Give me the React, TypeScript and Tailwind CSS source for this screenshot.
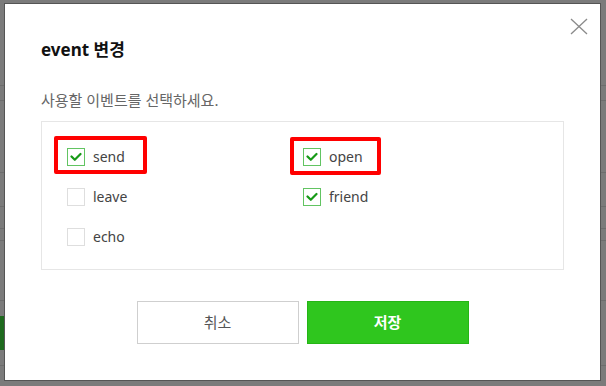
type EventItem = {
  name: string;
  checked: boolean;
  marked?: boolean;
};

const leftColumn: EventItem[] = [
  { name: "send", checked: true, marked: true },
  { name: "leave", checked: false },
  { name: "echo", checked: false },
];

const rightColumn: EventItem[] = [
  { name: "open", checked: true, marked: true },
  { name: "friend", checked: true },
];

function CheckBox({ checked }: { checked: boolean }) {
  return (
    <span
      className={
        checked
          ? "flex h-[18px] w-[18px] items-center justify-center border border-[#62c462] bg-white"
          : "flex h-[18px] w-[18px] items-center justify-center border border-[#dedede] bg-white"
      }
    >
      {checked && (
        <svg width="12" height="10" viewBox="0 0 12 10" fill="none">
          <polyline points="1.5,4.5 4.8,7.8 10.5,2" stroke="#169a16" strokeWidth="2.2" strokeLinecap="round" strokeLinejoin="round" />
        </svg>
      )}
    </span>
  );
}

function EventRow({ item }: { item: EventItem }) {
  return (
    <div className="flex h-10 items-center">
      <label className="relative flex items-center gap-[8px] text-[14px] text-[#444]">
        <CheckBox checked={item.checked} />
        <span className="leading-[18px]">{item.name}</span>
        {item.marked && (
          <span
            className={
              item.name === "send"
                ? "pointer-events-none absolute left-[-13px] top-[-12px] h-[38px] w-[93px] rounded-[2px] border-[4px] border-[#ff0000]"
                : "pointer-events-none absolute left-[-13px] top-[-11px] h-[38px] w-[91px] rounded-[2px] border-[4px] border-[#ff0000]"
            }
          />
        )}
      </label>
    </div>
  );
}

// faint page content behind the overlay
const bgLines = [85, 100, 172, 206, 228, 240, 300, 365];

export default function App() {
  return (
    <div
      className="relative h-[386px] w-[606px] overflow-hidden bg-[#7b7b7b]"
      style={{ fontFamily: '"Noto Sans", "Noto Sans CJK KR", sans-serif' }}
    >
      <div className="absolute inset-0">
        {bgLines.map((y) => (
          <div key={y} className="absolute left-0 right-0 h-px bg-[#6d6d6d]" style={{ top: y }} />
        ))}
        <div className="absolute left-0 top-[316px] h-[34px] w-[5px] bg-[#1e6a1e]" />
      </div>

      <div className="absolute left-[4px] top-[3px] h-[378px] w-[597px] border border-[#555] bg-white">
        <button className="absolute right-[12px] top-[14px]">
          <svg width="18" height="17" viewBox="0 0 18 17" fill="none">
            <line x1="1" y1="1" x2="17" y2="16" stroke="#8a8a8a" strokeWidth="1.3" />
            <line x1="17" y1="1" x2="1" y2="16" stroke="#8a8a8a" strokeWidth="1.3" />
          </svg>
        </button>

        <div className="px-[36px] pt-[34px]">
          <h2 className="text-[17px] font-bold leading-6 text-[#111]">event 변경</h2>
          <p className="mt-[28px] text-[15px] leading-5 text-[#666]">사용할 이벤트를 선택하세요.</p>

          <div className="mt-[11px] grid h-[149px] w-[523px] grid-cols-[236px_1fr] border border-[#e6e6e6] pl-[25px] pt-[15px]">
            <div className="flex flex-col">
              {leftColumn.map((item) => (
                <EventRow key={item.name} item={item} />
              ))}
            </div>
            <div className="flex flex-col">
              {rightColumn.map((item) => (
                <EventRow key={item.name} item={item} />
              ))}
            </div>
          </div>
        </div>

        <div className="mt-[31px] flex justify-center gap-[8px]">
          <button className="h-[43px] w-[162px] border border-[#cfcfcf] bg-white text-[15px] text-[#555]">취소</button>
          <button className="h-[43px] w-[162px] border border-[#25b516] bg-[#2fc61e] text-[15px] font-bold text-white">저장</button>
        </div>
      </div>
    </div>
  );
}
